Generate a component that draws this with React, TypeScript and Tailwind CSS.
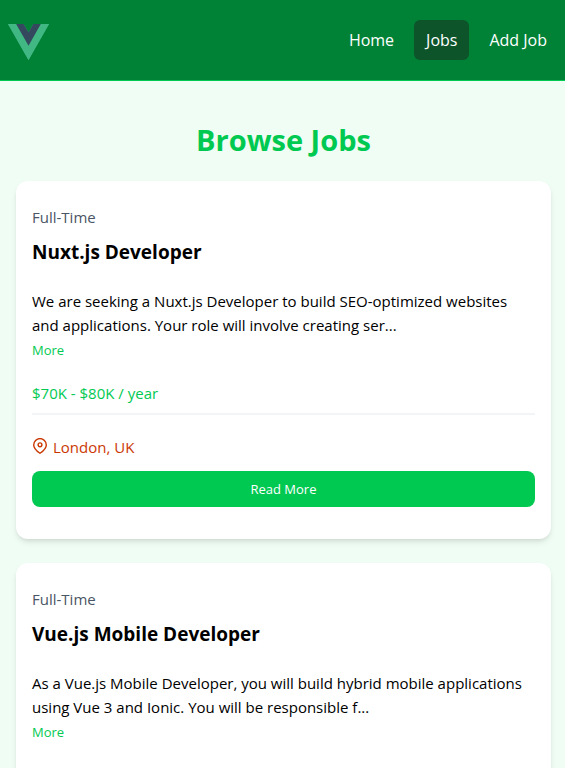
import React from 'react'

type Job = {
  id: number
  type: string
  title: string
  description: string
  salary: string
  location: string
}

const jobs: Job[] = [
  {
    id: 1,
    type: 'Full-Time',
    title: 'Nuxt.js Developer',
    description:
      'We are seeking a Nuxt.js Developer to build SEO-optimized websites and applications. Your role will involve creating ser...',
    salary: '$70K - $80K / year',
    location: 'London, UK',
  },
  {
    id: 2,
    type: 'Full-Time',
    title: 'Vue.js Mobile Developer',
    description:
      'As a Vue.js Mobile Developer, you will build hybrid mobile applications using Vue 3 and Ionic. You will be responsible f...',
    salary: '$90K - $100K / year',
    location: 'Miami, FL',
  },
]

function Logo() {
  return (
    <svg viewBox="0 0 256 221" className="h-9 w-[41px]" aria-hidden="true" preserveAspectRatio="none">
      <path fill="#41B883" d="M204.8 0H256L128 220.8 0 0h97.92L128 51.2 157.44 0h47.36z" />
      <path fill="#41B883" d="M0 0l128 220.8L256 0h-51.2L128 132.48 50.56 0H0z" />
      <path fill="#35495E" d="M50.56 0L128 133.12 204.8 0h-47.36L128 51.2 97.92 0H50.56z" />
    </svg>
  )
}

function MapMarker() {
  return (
    <svg viewBox="0 1 16 18" className="h-[18px] w-4" fill="none" stroke="currentColor" aria-hidden="true">
      <path
        strokeWidth="1.4"
        strokeLinejoin="round"
        d="M8 16.3C5.6 14.6 1.7 11.3 1.7 7.9a6.3 6.3 0 0 1 12.6 0c0 3.4-3.9 6.7-6.3 8.4z"
      />
      <circle cx="8" cy="7.8" r="1.9" strokeWidth="1.4" />
    </svg>
  )
}

function Navbar() {
  return (
    <nav className="border-b border-green-500 bg-green-700">
      <div className="flex h-20 items-center justify-between pr-1.5 pl-2">
        <a href="#home" aria-label="Vue Jobs" className="pt-1">
          <Logo />
        </a>
        <div className="flex gap-2 text-[16px] text-white">
          <a href="#home" className="rounded-md px-3 py-2">Home</a>
          <a href="#jobs" className="rounded-md bg-green-900 px-3 py-2">Jobs</a>
          <a href="#add" className="rounded-md px-3 py-2">Add Job</a>
        </div>
      </div>
    </nav>
  )
}

function JobCard({ job }: { job: Job }) {
  return (
    <article className="rounded-xl bg-white px-4 pt-6 pb-8 shadow-md">
      <p className="text-gray-600">{job.type}</p>
      <h3 className="mt-2 pt-px text-[19px] leading-7 font-bold">{job.title}</h3>
      <p className="mt-[23px]">{job.description}</p>
      <button type="button" className="block pt-px text-[13px] leading-6 text-green-500">More</button>
      <p className="mt-[19px] text-green-500">{job.salary}</p>
      <div className="mt-2 mb-5 border-t-2 border-gray-100" />
      <p className="flex items-center gap-[5px] text-orange-700">
        <MapMarker />
        {job.location}
      </p>
      <a
        href={`#jobs/${job.id}`}
        className="mt-3 block h-9 rounded-lg bg-green-500 text-center text-[13px] leading-9 text-white"
      >
        Read More
      </a>
    </article>
  )
}

export default function App() {
  return (
    <div className="min-h-screen bg-green-50 font-['Open_Sans',sans-serif] text-[15px] leading-6 text-black">
      <Navbar />
      <main className="py-10 pr-3.5 pl-4">
        <h2 className="mb-[23px] pt-px text-center text-[29px] leading-9 font-bold text-green-500">Browse Jobs</h2>
        <div className="grid gap-6">
          {jobs.map((job) => (
            <JobCard key={job.id} job={job} />
          ))}
        </div>
      </main>
    </div>
  )
}
